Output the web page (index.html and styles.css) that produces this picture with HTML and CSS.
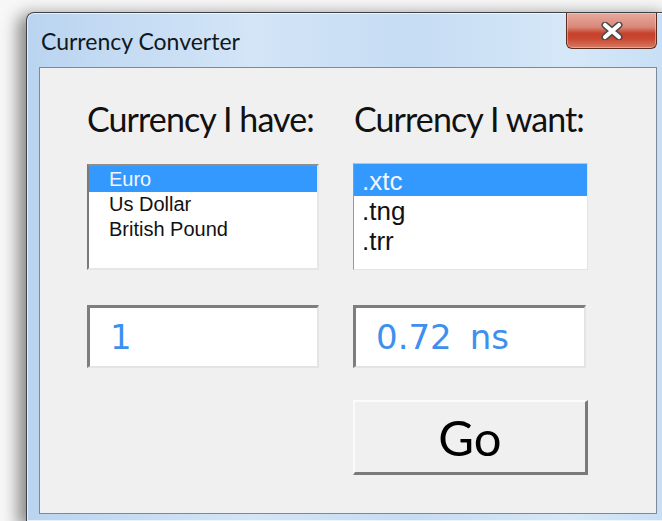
FILE: index.html
```html
<!DOCTYPE html>
<html lang="en">
<head>
<meta charset="utf-8">
<title>Currency Converter</title>
<link rel="stylesheet" href="styles.css">
</head>
<body>
<div class="window">
  <div class="titlebar">
    <span class="title">Currency Converter</span>
    <button class="close" aria-label="Close">
      <svg width="24" height="18" viewBox="0 0 24 18">
        <path d="M5 3 L19 15 M19 3 L5 15" stroke="#4a4a4a" stroke-width="7" stroke-linecap="round" fill="none"/>
        <path d="M5 3 L19 15 M19 3 L5 15" stroke="#ffffff" stroke-width="4.2" stroke-linecap="round" fill="none"/>
      </svg>
    </button>
  </div>
  <div class="client">
    <div class="form">
      <div class="caption">Currency I have:</div>
      <div class="caption caption-right">Currency I want:</div>
      <ul class="list list-from">
        <li class="selected">Euro</li>
        <li>Us Dollar</li>
        <li>British Pound</li>
      </ul>
      <ul class="list list-to">
        <li class="selected">.xtc</li>
        <li>.tng</li>
        <li>.trr</li>
      </ul>
      <div class="field">1</div>
      <div class="field field-right">0.72<span class="unit">ns</span></div>
      <button class="go">Go</button>
    </div>
  </div>
</div>
</body>
</html>
```
FILE: styles.css
```css
html, body {
  margin: 0;
  padding: 0;
}

body {
  width: 662px;
  height: 521px;
  overflow: hidden;
  background: #f7f7f7;
}

/* Aero-style window frame */
.window {
  margin: 12px 0 0 26px;
  width: 644px;
  height: 509px;
  box-sizing: border-box;
  border: 1px solid #3e4245;
  border-bottom: none;
  border-radius: 8px 8px 0 0;
  padding: 0 12px;
  background: linear-gradient(to right, #bad4f0 0%, #d3e5f7 35%, #c6dcf3 60%, #d6e8f8 85%, #c7def5 100%);
  box-shadow: inset 0 0 0 1px rgba(255, 255, 255, 0.65), -6px 4px 16px 2px rgba(0, 0, 0, 0.45);
}

.titlebar {
  height: 54px;
  display: flex;
  justify-content: space-between;
  align-items: flex-start;
}

.title {
  margin: 13px 0 0 2px;
  font-family: Lato, "Liberation Sans", sans-serif;
  font-size: 23px;
  line-height: 30px;
  color: #101820;
}

.close {
  width: 91px;
  height: 36px;
  margin: 0;
  padding: 0;
  border: 1px solid #5d2b22;
  border-top: none;
  border-radius: 0 0 6px 6px;
  background: linear-gradient(to bottom, #e7aa9d 0%, #d9887a 40%, #c6422c 58%, #c9452e 72%, #d57a63 100%);
  box-shadow: inset 0 0 0 1px rgba(255, 220, 210, 0.45);
  display: flex;
  align-items: center;
  justify-content: center;
}

.client {
  height: 447px;
  box-sizing: border-box;
  border: 1px solid #7d8a96;
  background: #f0f0f0;
}

.form {
  display: grid;
  grid-template-columns: 232px 235px;
  column-gap: 34px;
  padding: 31px 0 0 47px;
  align-items: start;
}

.caption {
  font-family: Lato, "Liberation Sans", sans-serif;
  font-size: 34px;
  letter-spacing: -0.9px;
  line-height: 40px;
  color: #111;
  white-space: nowrap;
  margin-bottom: 25px;
}

.caption-right {
  margin-left: 1px;
}

/* sunken list boxes */
.list {
  list-style: none;
  margin: 0;
  padding: 0;
  height: 106px;
  box-sizing: border-box;
  background: #fff;
  font-family: "Liberation Sans", Arial, sans-serif;
  color: #111;
}

.list-from {
  border-top: 2px solid #8e8e8e;
  border-left: 2px solid #7a7a7a;
  border-right: 2px solid #e6e6e6;
  border-bottom: 2px solid #e6e6e6;
  font-size: 20px;
  line-height: 25px;
}

.list-from li {
  padding-left: 20px;
}

.list-from .selected {
  line-height: 26px;
}

.list-to {
  margin-top: -1px;
  height: 107px;
  border-top: 1px solid #a9c8ea;
  border-left: 1px solid #9a9a9a;
  border-right: 1px solid #e4e4e4;
  border-bottom: 1px solid #e4e4e4;
  font-size: 26px;
  line-height: 30px;
}

.list-to li {
  padding-left: 8px;
}

.list-to .selected {
  padding-top: 2px;
}

.list .selected {
  background: #3399ff;
  color: #f2f6ff;
}

/* sunken text boxes */
.field {
  margin-top: 35px;
  height: 63px;
  box-sizing: border-box;
  border-top: 3px solid #7e7e7e;
  border-left: 3px solid #7e7e7e;
  border-right: 2px solid #e4e4e4;
  border-bottom: 2px solid #e4e4e4;
  background: #fff;
  padding-left: 20px;
  font-family: "DejaVu Sans", sans-serif;
  font-size: 34px;
  line-height: 58px;
  color: #3d8ff0;
}

.field-right {
  width: 233px;
}

.unit {
  margin-left: 18px;
}

/* raised push button */
.go {
  grid-column: 2;
  margin: 32px 0 0 0;
  width: 235px;
  height: 75px;
  padding: 0;
  box-sizing: border-box;
  background: #f0f0f0;
  border-top: 2px solid #fbfbfb;
  border-left: 2px solid #fbfbfb;
  border-right: 3px solid #7a7a7a;
  border-bottom: 3px solid #7a7a7a;
  font-family: Lato, "Liberation Sans", sans-serif;
  font-size: 49px;
  color: #000;
  line-height: 68px;
}
```
